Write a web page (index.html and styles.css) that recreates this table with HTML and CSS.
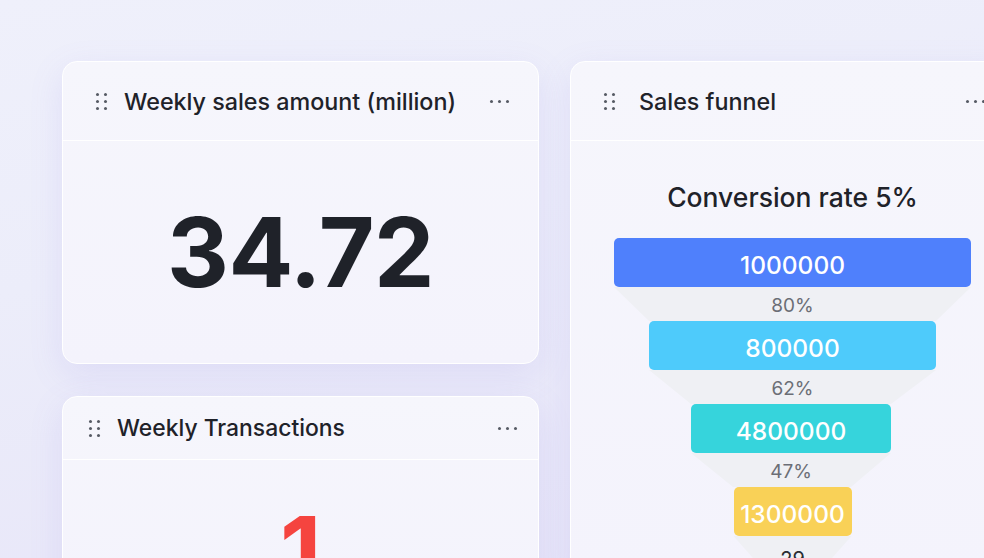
FILE: index.html
```html
<!DOCTYPE html>
<html lang="en">
<head>
<meta charset="utf-8">
<title>Dashboard</title>
<link rel="stylesheet" href="styles.css">
</head>
<body>
<main class="board">
  <section class="col">
    <article class="card card-sales">
      <header class="card-head">
        <span class="grip"><i></i><i></i><i></i><i></i><i></i><i></i></span>
        <h2 class="card-title">Weekly sales amount (million)</h2>
        <span class="more"><i></i><i></i><i></i></span>
      </header>
      <div class="card-body metric-body">
        <div class="metric">34.72</div>
      </div>
    </article>
    <article class="card card-tx">
      <header class="card-head">
        <span class="grip"><i></i><i></i><i></i><i></i><i></i><i></i></span>
        <h2 class="card-title">Weekly Transactions</h2>
        <span class="more"><i></i><i></i><i></i></span>
      </header>
      <div class="card-body metric-body">
        <div class="metric metric-red">1</div>
      </div>
    </article>
  </section>
  <article class="card card-funnel">
    <header class="card-head">
      <span class="grip"><i></i><i></i><i></i><i></i><i></i><i></i></span>
      <h2 class="card-title">Sales funnel</h2>
      <span class="more"><i></i><i></i><i></i></span>
    </header>
    <div class="card-body funnel-body">
      <h3 class="funnel-title">Conversion rate 5%</h3>
      <div class="funnel">
        <div class="stage stage-1">1000000</div>
        <div class="link link-1">80%</div>
        <div class="stage stage-2">800000</div>
        <div class="link link-2">62%</div>
        <div class="stage stage-3">4800000</div>
        <div class="link link-3">47%</div>
        <div class="stage stage-4">1300000</div>
        <div class="link link-4">29</div>
      </div>
    </div>
  </article>
</main>
</body>
</html>
```

FILE: styles.css
```css
* { box-sizing: border-box; }
html, body { margin: 0; padding: 0; }
body {
  width: 984px;
  height: 558px;
  overflow: hidden;
  font-family: "Inter", "Liberation Sans", sans-serif;
  color: #1f2229;
  background: linear-gradient(170deg, #eff0fb 0%, #ecedfa 40%, #e7e5f8 100%);
}
.board {
  display: flex;
  gap: 31px;
  padding: 61px 0 0 62px;
}
.col {
  display: flex;
  flex-direction: column;
  gap: 32px;
  width: 477px;
  flex: none;
}
.card {
  background: linear-gradient(180deg, #f6f6fc 0%, #f4f3fc 100%);
  border: 1.5px solid #ffffff;
  border-radius: 15px;
  box-shadow: 0 10px 34px rgba(130, 115, 225, 0.13);
  overflow: hidden;
  flex: none;
}
.card-sales { height: 303px; }
.card-tx { height: 200px; }
.card-funnel { width: 445px; height: 520px; }

.card-head {
  display: flex;
  align-items: center;
  height: 79px;
  padding: 0 29px 0 33px;
  border-bottom: 1.5px solid #ffffff;
}
.card-title {
  margin: 0 0 0 17px;
  flex: 1;
  font-size: 23.3px;
  font-weight: 500;
  letter-spacing: 0;
  color: #1f2229;
}
.grip {
  display: grid;
  grid-template-columns: repeat(2, 3px);
  grid-auto-rows: 3px;
  column-gap: 5px;
  row-gap: 4px;
  flex: none;
}
.grip i, .more i {
  display: block;
  width: 3px;
  height: 3px;
  border-radius: 50%;
  background: #565a64;
}
.more {
  display: flex;
  gap: 5px;
  flex: none;
}
.card-tx .card-head {
  height: 63px;
  padding: 0 21px 0 26px;
}
.card-tx .card-title { margin-left: 17px; font-size: 22.9px; }
.card-funnel .card-title { margin-left: 24px; }

.metric-body {
  display: flex;
  justify-content: center;
  padding-top: 63px;
}
.metric {
  font-size: 96px;
  font-weight: 700;
  line-height: 1;
  letter-spacing: -0.5px;
  color: #1f2229;
}
.metric-red { color: #f5443f; }
.card-tx .metric-body { padding-top: 43px; }

.funnel-body {
  display: flex;
  flex-direction: column;
  align-items: center;
  padding-top: 41px;
}
.funnel-title {
  margin: 0;
  font-size: 26.5px;
  font-weight: 500;
  line-height: 30px;
  color: #1f2229;
}
.funnel {
  display: flex;
  flex-direction: column;
  align-items: center;
  margin-top: 26px;
}
.stage {
  height: 49px;
  border-radius: 5px;
  display: flex;
  align-items: center;
  justify-content: center;
  color: #ffffff;
  font-size: 24.5px;
  font-weight: 500;
  padding-top: 4px;
}
.stage-1 { width: 357px; background: #4f80fc; }
.stage-2 { width: 287px; background: #4ecbfb; }
.stage-3 { width: 200px; background: #36d4dc; margin-right: 3px; }
.stage-4 { width: 118px; background: #f9d157; }

.link {
  height: 34px;
  display: flex;
  align-items: center;
  justify-content: center;
  background: #eff0f4;
  color: #6b6e76;
  font-size: 19px;
  padding-top: 2px;
}
.link-1 { width: 357px; clip-path: polygon(0 0, 100% 0, calc(100% - 35px) 100%, 35px 100%); }
.link-2 { width: 287px; clip-path: polygon(0 0, 100% 0, calc(100% - 45px) 100%, 42px 100%); }
.link-3 { width: 200px; margin-right: 3px; clip-path: polygon(0 0, 100% 0, calc(100% - 40px) 100%, 42px 100%); }
.link-4 { width: 118px; clip-path: polygon(0 0, 100% 0, calc(100% - 30px) 100%, 30px 100%); color: #2a2d33; font-size: 20px; padding-top: 12px; }
```
